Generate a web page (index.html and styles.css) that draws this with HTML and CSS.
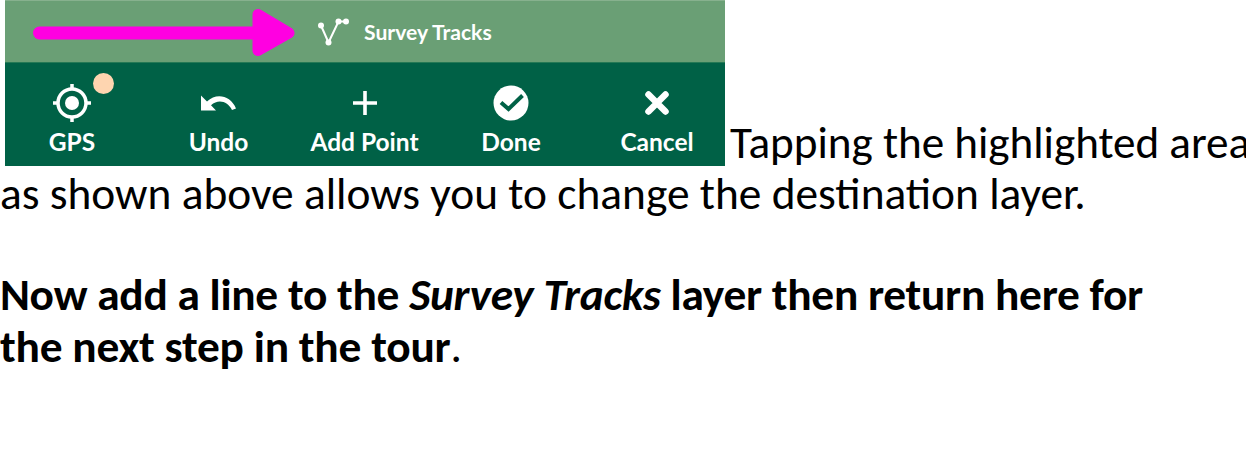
FILE: index.html
```html
<!DOCTYPE html>
<html lang="en">
<head>
<meta charset="utf-8">
<title>Survey Tracks tour</title>
<link rel="stylesheet" href="styles.css">
</head>
<body>
<main class="tour">
  <div class="intro">
    <section class="panel">
      <div class="layer-bar">
        <svg class="arrow" width="264" height="50" viewBox="0 0 264 50"><path d="M6.500 25H230" stroke="#ff00e1" stroke-width="13" stroke-linecap="round"/><path d="M225 6.500L256 25L225 42.500Z" fill="#ff00e1" stroke="#ff00e1" stroke-width="11" stroke-linejoin="round"/></svg>
        <svg class="track-icon" width="32" height="30" viewBox="0 0 32 30" fill="#fff"><path d="M4 8.500L11.500 25.500L21.500 4.500H29" fill="none" stroke="#fff" stroke-width="2"/><circle cx="4" cy="8.500" r="3"/><circle cx="11.500" cy="25.500" r="3"/><circle cx="21.500" cy="4.500" r="3"/><circle cx="29" cy="4.500" r="3"/></svg>
        <span class="layer-name">Survey Tracks</span>
      </div>
      <nav class="actions">
        <div class="action"><svg class="icon" width="40" height="40" viewBox="0 0 40 40"><circle cx="20" cy="20" r="14" fill="none" stroke="#fff" stroke-width="3.500"/><circle cx="20" cy="20" r="7" fill="#fff"/><path d="M20 1V6M20 34V39M1 20H6M34 20H39" stroke="#fff" stroke-width="3.500"/></svg><span class="label">GPS</span><i class="status"></i></div>
        <div class="action"><svg class="icon" width="40" height="40" viewBox="0 0 40 40"><path d="M2 12.500V27.500H17L12 22.200C19.500 15.500 29 18.500 33 27L37 25.500C31.500 12.500 17.500 9.500 8 18.500Z" fill="#fff"/></svg><span class="label">Undo</span></div>
        <div class="action"><svg class="icon" width="40" height="40" viewBox="0 0 40 40"><path d="M20 8V32M8 20H32" stroke="#fff" stroke-width="3.600"/></svg><span class="label">Add Point</span></div>
        <div class="action"><svg class="icon" width="40" height="40" viewBox="0 0 40 40"><circle cx="20" cy="20" r="17.500" fill="#fff"/><path d="M10 19.500L17.500 26L31.500 12.500" fill="none" stroke="#006146" stroke-width="4"/></svg><span class="label">Done</span></div>
        <div class="action"><svg class="icon" width="40" height="40" viewBox="0 0 40 40"><path d="M11.500 11.500L28.500 28.500M28.500 11.500L11.500 28.500" stroke="#fff" stroke-width="6.500" stroke-linecap="round"/></svg><span class="label">Cancel</span></div>
      </nav>
    </section>
    <span class="line lead">Tapping the highlighted area</span>
  </div>
  <p class="line second">as shown above allows you to change the destination layer.</p>
  <div class="task">
    <p class="line third">Now add a line to the <em>Survey Tracks</em> layer then return here for</p>
    <p class="line fourth">the next step in the tour<span class="stop">.</span></p>
  </div>
</main>
</body>
</html>
```
FILE: styles.css
```css
* { box-sizing: border-box; }
body { margin: 0; background: #fff; color: #000; font-family: Carlito, Lato, sans-serif; overflow: hidden; }
.intro { display: flex; align-items: flex-end; height: 168px; padding-left: 5px; }
.panel { width: 720px; height: 166px; margin-bottom: 2px; flex: none; background: #006146; color: #fff; }
.layer-bar { display: flex; align-items: center; height: 63px; padding-left: 28px; background: #6a9f75; border-top: 1px solid #87b18e; border-bottom: 1px solid #257955; }
.arrow { flex: none; margin-top: 3px; }
.track-icon { flex: none; margin-left: 20px; }
.layer-name { margin-left: 15px; font-family: Lato, sans-serif; font-size: 21.100px; font-weight: 700; white-space: nowrap; }
.actions { display: grid; grid-template-columns: 134px 159px 133px 160px 132px; height: 103px; }
.action { position: relative; display: flex; flex-direction: column; align-items: center; padding-top: 20px; }
.icon { display: block; flex: none; }
.label { margin-top: 4px; font-family: Lato, sans-serif; font-size: 24.500px; font-weight: 700; line-height: 30px; white-space: nowrap; }
.status { position: absolute; left: 88px; top: 10px; width: 21px; height: 21px; border-radius: 50%; background: #fed5b0; }
.line { display: block; margin: 0; font-size: 45.400px; line-height: 51.300px; white-space: nowrap; }
.lead { margin-left: 5px; font-size: 45.200px; letter-spacing: -0.040px; }
.task { padding-top: 50px; font-weight: 700; }
.third { letter-spacing: -0.280px; }
.fourth { letter-spacing: -0.220px; }
.stop { font-weight: 400; }
```
